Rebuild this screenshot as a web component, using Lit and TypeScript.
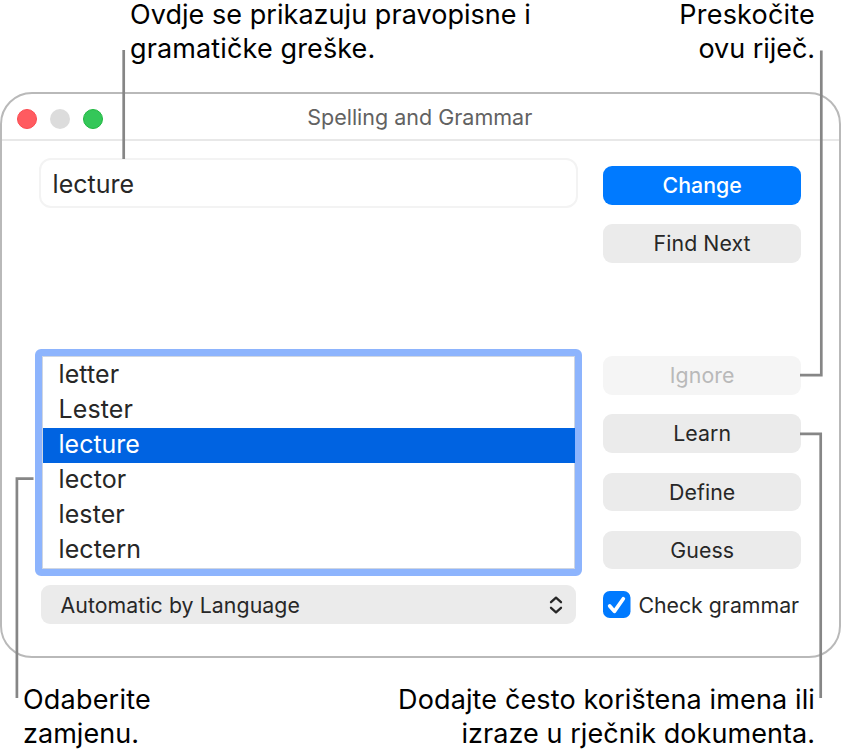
import { LitElement, html, css } from "lit";
import { customElement, property, state } from "lit/decorators.js";
import { classMap } from "lit/directives/class-map.js";

@customElement("push-button")
class PushButton extends LitElement {
  @property() kind = "normal";

  static styles = css`
    :host { display: block; }
    button {
      display: block; box-sizing: border-box; width: 100%; height: 38.6px;
      border: 0; border-radius: 9px; padding: 0; margin: 0;
      background: #ebebeb; color: #272727;
      font: 400 21.3px/39.2px Inter, "Liberation Sans", sans-serif;
      letter-spacing: 0.08px; text-align: center;
    }
    .primary { background: #007aff; color: #fff; font-weight: 500; letter-spacing: 0; }
    .disabled { background: #f5f5f5; color: #b9b9b9; }
  `;

  render() {
    return html`<button
      class=${classMap({ primary: this.kind === "primary", disabled: this.kind === "disabled" })}
      ?disabled=${this.kind === "disabled"}
    ><slot></slot></button>`;
  }
}

@customElement("app-root")
class AppRoot extends LitElement {
  @state() private selected = 2;

  private words = ["letter", "Lester", "lecture", "lector", "lester", "lectern"];

  static styles = css`
    :host {
      display: flex; flex-direction: column; position: relative;
      width: 843px; height: 755px; background: #fff;
      font-family: Inter, "Liberation Sans", sans-serif; color: #272727;
    }
    .captions {
      display: flex; justify-content: space-between; box-sizing: border-box;
      color: #000; font-size: 27px; line-height: 34.5px; white-space: nowrap;
    }
    .captions.top { height: 92px; padding: 0 28px 0 130px; }
    .captions.top .caption div:first-child { line-height: 29px; padding-bottom: 3px; }
    .captions.bottom { padding: 25.5px 28px 0 23px; line-height: 34px; }
    .caption div { letter-spacing: 0.05px; }
    .caption.end { text-align: right; }
    .caption .tight { letter-spacing: -0.05px; }
    .caption .loose { letter-spacing: 0.2px; }
    .caption .mid { letter-spacing: 0.13px; }

    .window {
      box-sizing: border-box; width: 841px; height: 565.5px; flex: none;
      border: 2px solid #b9b9b9; border-radius: 32px;
      display: flex; flex-direction: column;
    }
    .titlebar {
      display: grid; grid-template-columns: 1fr auto 1fr; align-items: center;
      height: 47px; box-sizing: border-box; border-bottom: 2px solid #e8e8e8; flex: none;
    }
    .lights { display: flex; gap: 13px; padding: 5px 0 0 15px; }
    .light { width: 20px; height: 20px; border-radius: 50%; box-sizing: border-box; }
    .red { background: #ff5b60; border: 1px solid #fb4a50; }
    .gray { background: #dcdcdc; }
    .green { background: #34c759; border: 1px solid #1fb840; }
    .title { font-size: 21.5px; line-height: 28px; color: #626262; padding: 0.8px 1.5px 0 0; }

    .body { display: grid; grid-template-columns: 547px 197.5px; column-gap: 21.4px; padding: 17px 0 0 33px; }
    .left { display: flex; flex-direction: column; }
    .field {
      box-sizing: border-box; width: 539px; height: 50px; margin-left: 4px;
      border: 2px solid #f3f3f3; border-radius: 12px; padding: 0 11.6px;
      font-size: 25px; line-height: 49px;
    }
    .list {
      box-sizing: border-box; width: 547px; height: 227px; margin-top: 140.5px;
      border: 7px solid #8db4fd; border-radius: 6px; display: flex; flex-direction: column;
      padding: 1px 0 0; box-shadow: inset 0 0 0 1px #cfd6e2;
    }
    .row {
      height: 35px; line-height: 32.6px; font-size: 25px; padding-left: 15.5px;
      margin: 0 0.5px 0 1px; letter-spacing: 0.1px;
    }
    .row:first-child { margin-top: 1px; }
    .row.selected { background: #0063e1; color: #fff; letter-spacing: 0; }
    .popup {
      display: flex; align-items: center; justify-content: space-between; box-sizing: border-box;
      width: 535px; height: 39px; margin: 9.5px 0 0 6px; border-radius: 9px;
      background: #ebebeb; padding: 0 12px 0 19.5px; font-size: 21.3px; letter-spacing: 0.07px;
    }
    .right { display: flex; flex-direction: column; gap: 19.65px; padding-top: 8px; }
    .gap { margin-top: 73.7px; }
    .check { display: flex; align-items: center; gap: 7.5px; font-size: 21.3px; line-height: 27px; white-space: nowrap; margin-top: 1px; }
    .check span { padding-top: 2px; }
    .box { display: block; flex: none; }
    .leaders { position: absolute; inset: 0; pointer-events: none; }
  `;

  render() {
    return html`
      <div class="captions top">
        <div class="caption">
          <div class="line">Ovdje se prikazuju pravopisne i</div>
          <div class="mid">gramatičke greške.</div>
        </div>
        <div class="caption end">
          <div class="loose">Preskočite</div>
          <div class="tight">ovu riječ.</div>
        </div>
      </div>

      <section class="window">
        <header class="titlebar">
          <div class="lights">
            <span class="light red"></span><span class="light gray"></span><span class="light green"></span>
          </div>
          <div class="title">Spelling and Grammar</div>
          <div></div>
        </header>
        <div class="body">
          <div class="left">
            <div class="field">lecture</div>
            <div class="list">
              ${this.words.map((w, i) => html`
                <div class=${classMap({ row: true, selected: i === this.selected })} @click=${() => (this.selected = i)}>${w}</div>
              `)}
            </div>
            <div class="popup">
              <span>Automatic by Language</span>
              <svg width="16" height="20" viewBox="0 0 16 20" fill="none" stroke="#272727" stroke-width="2.3" stroke-linecap="round" stroke-linejoin="round">
                <path d="M3 7.2 8 2.7l5 4.5M3 12.8l5 4.5 5-4.5" />
              </svg>
            </div>
          </div>
          <div class="right">
            <push-button kind="primary">Change</push-button>
            <push-button>Find Next</push-button>
            <push-button class="gap" kind="disabled">Ignore</push-button>
            <push-button>Learn</push-button>
            <push-button>Define</push-button>
            <push-button>Guess</push-button>
            <div class="check">
              <svg class="box" width="27.5" height="27" viewBox="0 0 27.5 27">
                <rect width="27.5" height="27" rx="6.8" fill="#007aff" />
                <path d="M6.7 15 11.4 20.4 20.3 7.8" fill="none" stroke="#fff" stroke-width="3.7" stroke-linecap="round" stroke-linejoin="round" />
              </svg>
              <span>Check grammar</span>
            </div>
          </div>
        </div>
      </section>

      <div class="captions bottom">
        <div class="caption">
          <div class="loose">Odaberite</div>
          <div class="line">zamjenu.</div>
        </div>
        <div class="caption end">
          <div class="mid">Dodajte često korištena imena ili</div>
          <div class="line">izraze u rječnik dokumenta.</div>
        </div>
      </div>

      <svg class="leaders" width="843" height="755" viewBox="0 0 843 755" fill="none" stroke="#868686" stroke-width="2.7">
        <path d="M123.7 50V159M821.3 50.5V375.2H800M33.5 478.7H16.9V698M800 433.8H820.7V698" />
      </svg>
    `;
  }
}
